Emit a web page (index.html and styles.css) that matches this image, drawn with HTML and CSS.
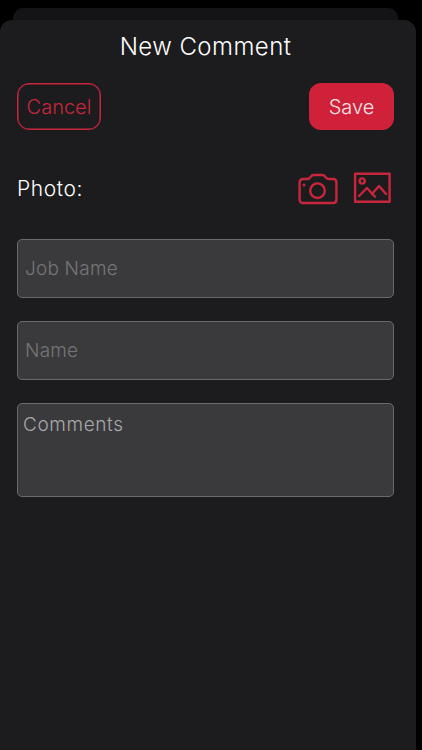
FILE: index.html
```html
<!DOCTYPE html>
<html lang="en">
<head>
<meta charset="utf-8">
<title>New Comment</title>
<link rel="stylesheet" href="styles.css">
</head>
<body>
<div class="back-card"></div>
<main class="sheet">
  <h1 class="title">New Comment</h1>
  <div class="actions">
    <button class="btn btn-cancel" type="button">Cancel</button>
    <button class="btn btn-save" type="button">Save</button>
  </div>
  <div class="photo-row">
    <span class="photo-label">Photo:</span>
    <div class="photo-icons">
      <svg class="icon-camera" width="40" height="32" viewBox="0 0 40 32" fill="none" stroke="#c8263c" stroke-width="2.4" stroke-linejoin="round" stroke-linecap="round">
        <path d="M5 6h4.500c1.200 0 1.900-.5 2.600-1.400l.8-1c.7-1 1.500-1.600 2.800-1.600h8.600c1.300 0 2.100.6 2.800 1.600l.8 1c.7.9 1.400 1.400 2.600 1.400H35c2 0 3.400 1.400 3.400 3.400v17.300c0 2-1.400 3.300-3.400 3.300H5c-2 0-3.400-1.300-3.400-3.300V9.400C1.600 7.400 3 6 5 6z"/>
        <circle cx="19.500" cy="17.700" r="7.300"/>
        <circle cx="6" cy="12" r=".8" stroke-width="1.400"/>
      </svg>
      <svg class="icon-image" width="38" height="32" viewBox="0 0 38 32" fill="none" stroke="#c8263c" stroke-width="2.4" stroke-linejoin="round" stroke-linecap="round">
        <rect x="2.100" y="1.800" width="34.500" height="28"/>
        <circle cx="9.200" cy="9" r="2.600"/>
        <path d="M6 24l8-8 8 8.700"/>
        <path d="M19 22l7-8 7 8"/>
      </svg>
    </div>
  </div>
  <form class="fields">
    <input class="field" type="text" placeholder="Job Name">
    <input class="field" type="text" placeholder="Name">
    <textarea class="field field-area" placeholder="Comments"></textarea>
  </form>
</main>
</body>
</html>
```
FILE: styles.css
```css
* { box-sizing: border-box; }
html, body { margin: 0; height: 100%; }
body {
  background: #000;
  font-family: Inter, "Liberation Sans", sans-serif;
  font-weight: 300;
  overflow: hidden;
  padding-top: 8px;
}
.back-card {
  height: 12px;
  margin: 0 24px 0 13px;
  background: #141416;
  border-radius: 10px 10px 0 0;
}
.sheet {
  width: 416px;
  height: 730px;
  background: #1c1c1e;
  border-radius: 12px 12px 0 0;
  padding: 0 22px 0 17px;
}
.title {
  margin: 0;
  padding-top: 13px;
  height: 63px;
  text-align: center;
  font-size: 24px;
  line-height: 28px;
  font-weight: 300;
  letter-spacing: .45px;
  color: #fff;
}
.actions { display: flex; justify-content: space-between; }
.btn {
  height: 47px;
  border-radius: 12px;
  font: inherit;
  font-size: 20px;
  padding: 0;
}
.btn-cancel {
  width: 84px;
  background: transparent;
  border: 1px solid #c8263c;
  box-shadow: inset 0 0 0 .5px #c8263c;
  color: #c8263c;
}
.btn-save {
  width: 85px;
  background: #d0213a;
  border: 0;
  color: #f6e6e8;
}
.photo-row {
  display: flex;
  justify-content: space-between;
  align-items: center;
  margin-top: 41px;
  height: 36px;
}
.photo-label { color: #fff; font-size: 21px; letter-spacing: .6px; margin-bottom: 2px; }
.photo-icons { display: flex; align-items: center; gap: 15px; padding-right: 3px; }
.icon-image { margin-bottom: 2px; }
.fields { display: flex; flex-direction: column; gap: 23px; margin-top: 32px; }
.field {
  display: block;
  width: 100%;
  height: 59px;
  background: #3a3a3c;
  border: 1px solid #6a6a6c;
  border-radius: 5px;
  padding: 0 7px;
  font: inherit;
  font-size: 19px;
  letter-spacing: .2px;
  color: #fff;
  outline: 0;
}
.field::placeholder { color: #757577; opacity: 1; }
.field-area {
  height: 94px;
  padding: 9px 5px;
  line-height: 24px;
  letter-spacing: .6px;
  resize: none;
}
.field-area::placeholder { color: #a8a8aa; }
```
